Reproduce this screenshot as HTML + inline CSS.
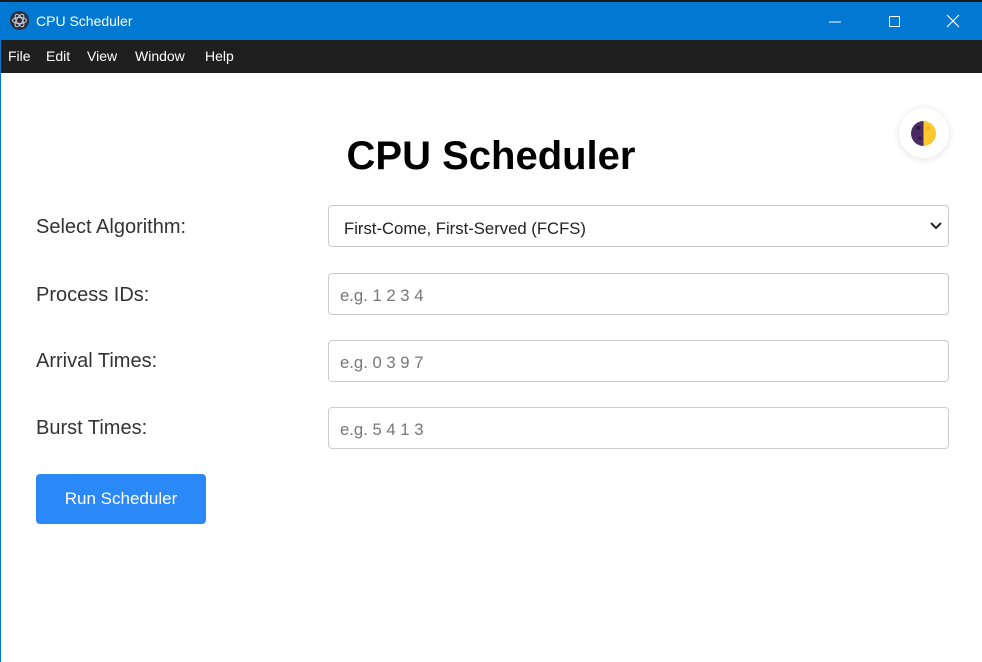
<!DOCTYPE html>
<html><head><style>
*{box-sizing:border-box;margin:0;padding:0}
body{width:982px;height:662px;background:#fff;font-family:"Liberation Sans",sans-serif;position:relative;overflow:hidden}
.tb{position:absolute;left:0;top:0;width:982px;height:40px;background:#0179d3;border-top:2px solid #1a1a1a;color:#fff}
.tb .t{position:absolute;left:36px;top:11px;font-size:14px}
.ic{position:absolute;left:10px;top:9px;width:19px;height:19px;border-radius:50%;background:#2b2e3a}
.menu{position:absolute;left:0;top:40px;width:982px;height:33px;background:#1f1f1f;color:#fff;font-size:14px}
.menu span{position:absolute;top:8px}
.lb{position:absolute;left:36px;font-size:20px;color:#333}
.in{position:absolute;left:328px;width:621px;height:42px;border:1px solid #ccc;border-radius:4px;font-size:16.7px;color:#777;padding:12px 11px}
h1{position:absolute;left:0;width:982px;text-align:center;top:134px;font-size:40px;font-weight:bold;color:#000}
.btn{position:absolute;left:36px;top:474px;width:170px;height:50px;background:#2b88f7;border-radius:4px;color:#fff;font-size:17px;text-align:center;line-height:50px}
.tg{position:absolute;left:899px;top:108px;width:50px;height:50px;border-radius:50%;background:#fff;box-shadow:0 1px 8px rgba(0,0,0,.12)}
</style></head><body>
<div class="tb"><div class="ic"><svg width="19" height="19" viewBox="0 0 19 19"><g fill="none" stroke="#c9ccd6" stroke-width="1"><ellipse cx="9.5" cy="9.5" rx="7" ry="3" transform="rotate(60 9.5 9.5)"/><ellipse cx="9.5" cy="9.5" rx="7" ry="3" transform="rotate(-60 9.5 9.5)"/><ellipse cx="9.5" cy="9.5" rx="7" ry="3"/></g></svg></div><div class="t">CPU Scheduler</div>
<svg style="position:absolute;left:829px;top:13px" width="14" height="14"><line x1="0" y1="7" x2="12" y2="7" stroke="#fff"/></svg>
<svg style="position:absolute;left:888px;top:13px" width="14" height="14"><rect x="1.5" y="1.5" width="10" height="10" fill="none" stroke="#fff"/></svg>
<svg style="position:absolute;left:946px;top:12px" width="14" height="14"><path d="M1 1L13 13M13 1L1 13" stroke="#fff" stroke-width="1.2"/></svg>
</div>
<div class="menu"><span style="left:8px">File</span><span style="left:46px">Edit</span><span style="left:87px">View</span><span style="left:135px">Window</span><span style="left:205px">Help</span></div>
<div class="tg"><svg style="position:absolute;left:12px;top:13px" width="25" height="25" viewBox="0 0 25 25"><path d="M12.5 0A12.5 12.5 0 0 0 12.5 25Z" fill="#4a2c63"/><path d="M12.5 0A12.5 12.5 0 0 1 12.5 25Z" fill="#fcc82e"/><circle cx="7" cy="7" r="2" fill="#2e1a3f"/><circle cx="9" cy="17" r="1.6" fill="#2e1a3f"/><circle cx="17" cy="7" r="1.6" fill="#f0b31c"/></svg></div>
<h1>CPU Scheduler</h1>
<div class="lb" style="top:216px">Select Algorithm:</div>
<div class="in" style="top:205px;color:#222;padding:12px 15px;padding-top:13px">First-Come, First-Served (FCFS)<svg style="position:absolute;right:6px;top:15px" width="12" height="10"><path d="M1 2L6 7L11 2" fill="none" stroke="#222" stroke-width="2"/></svg></div>
<div class="lb" style="top:284px">Process IDs:</div>
<div class="in" style="top:273px">e.g. 1 2 3 4</div>
<div class="lb" style="top:350px">Arrival Times:</div>
<div class="in" style="top:340px">e.g. 0 3 9 7</div>
<div class="lb" style="top:417px">Burst Times:</div>
<div class="in" style="top:407px">e.g. 5 4 1 3</div>
<div class="btn">Run Scheduler</div>
<div style="position:absolute;left:0;top:40px;width:1px;height:622px;background:#0179d3"></div>
</body></html>
